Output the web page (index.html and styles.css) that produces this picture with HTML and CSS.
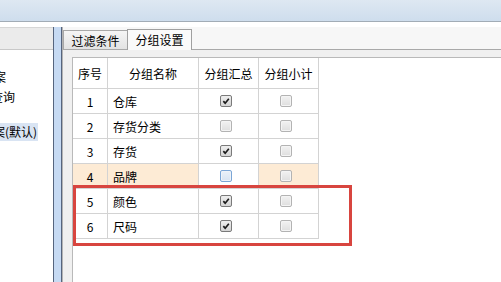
FILE: index.html
```html
<!DOCTYPE html>
<html lang="zh-CN">
<head>
<meta charset="utf-8">
<title>分组设置</title>
<link rel="stylesheet" href="styles.css">
</head>
<body>
<div class="topbar"></div>
<div class="main">
  <aside class="left">
    <div class="left-head"></div>
    <ul class="tree">
      <li class="item w1"><span>方案</span></li>
      <li class="item w2"><span>查询</span></li>
      <li class="item w3 selected"><span>方案(默认)</span></li>
    </ul>
  </aside>
  <div class="splitter"></div>
  <section class="content">
    <div class="tabs">
      <div class="tab">过滤条件</div>
      <div class="tab active">分组设置</div>
    </div>
    <div class="panel">
      <div class="grid-area">
        <div class="grid">
          <div class="cell head">序号</div>
          <div class="cell head">分组名称</div>
          <div class="cell head">分组汇总</div>
          <div class="cell head">分组小计</div>

          <div class="cell">1</div>
          <div class="cell name">仓库</div>
          <div class="cell chk"><span class="cb checked"><svg viewBox="0 0 12 12"><path d="M2.8 6.2 L5 8.6 L9.4 3.2"/></svg></span></div>
          <div class="cell chk"><span class="cb"></span></div>

          <div class="cell">2</div>
          <div class="cell name">存货分类</div>
          <div class="cell chk"><span class="cb"></span></div>
          <div class="cell chk"><span class="cb"></span></div>

          <div class="cell">3</div>
          <div class="cell name">存货</div>
          <div class="cell chk"><span class="cb checked"><svg viewBox="0 0 12 12"><path d="M2.8 6.2 L5 8.6 L9.4 3.2"/></svg></span></div>
          <div class="cell chk"><span class="cb"></span></div>

          <div class="cell hl">4</div>
          <div class="cell name hl">品牌</div>
          <div class="cell chk"><span class="cb focus"></span></div>
          <div class="cell chk hl"><span class="cb"></span></div>

          <div class="cell">5</div>
          <div class="cell name">颜色</div>
          <div class="cell chk"><span class="cb checked"><svg viewBox="0 0 12 12"><path d="M2.8 6.2 L5 8.6 L9.4 3.2"/></svg></span></div>
          <div class="cell chk"><span class="cb"></span></div>

          <div class="cell">6</div>
          <div class="cell name">尺码</div>
          <div class="cell chk"><span class="cb checked"><svg viewBox="0 0 12 12"><path d="M2.8 6.2 L5 8.6 L9.4 3.2"/></svg></span></div>
          <div class="cell chk"><span class="cb"></span></div>
        </div>
        <div class="redbox"></div>
      </div>
    </div>
  </section>
</div>
</body>
</html>
```
FILE: styles.css
```css
* { box-sizing: border-box; }

html, body {
  margin: 0;
  padding: 0;
}

body {
  width: 501px;
  height: 282px;
  overflow: hidden;
  background: #ffffff;
  color: #000000;
  font-family: "Noto Sans CJK SC", "Liberation Sans", sans-serif;
  font-size: 12px;
}

.topbar {
  height: 22px;
  background: linear-gradient(#dee8f2, #cedded);
  border-bottom: 1px solid #a2acb6;
}

.main {
  display: flex;
  height: 260px;
  padding-top: 5px;
  background: #ffffff;
}

/* left panel */
.left {
  width: 53px;
  display: flex;
  flex-direction: column;
  background: #ffffff;
}

.left-head {
  height: 23px;
  background: #ebebeb;
  border-top: 1px solid #d6d6d6;
  border-bottom: 1px solid #c8c8c8;
}

.tree {
  list-style: none;
  margin: 0;
  padding: 17px 0 0 0;
}

.item {
  display: flex;
  justify-content: flex-end;
  overflow: hidden;
  white-space: nowrap;
  height: 20px;
  line-height: 20px;
}

.item span { flex: none; }

.w1 { width: 6px; }
.w2 { width: 15px; }
.w3 {
  width: 38px;
  margin-top: 16px;
  height: 18px;
  line-height: 18px;
  padding-right: 1px;
}

.selected { background: #d9e4f3; }

/* splitter */
.splitter {
  width: 9px;
  background: #c6daf3;
  border-left: 1px solid #56657e;
  border-right: 1px solid #56657e;
}

/* content */
.content {
  flex: 1;
  display: flex;
  flex-direction: column;
  border-left: 1px solid #b4b4b4;
}

.tabs {
  height: 23px;
  display: flex;
  align-items: flex-end;
  background: #f7f7f7;
  border-bottom: 1px solid #a9a9a9;
}

.tab {
  width: 65px;
  height: 19px;
  display: flex;
  align-items: center;
  justify-content: center;
  background: linear-gradient(#f5f5f5, #e3e3e3);
  border: 1px solid #a8a8a8;
  border-bottom: none;
}

.tab.active {
  height: 21px;
  margin-bottom: -1px;
  margin-left: -1px;
  background: #fafafa;
  border-color: #a0a0a0;
  padding-bottom: 2px;
}

.panel {
  flex: 1;
  display: flex;
  flex-direction: column;
  background: #f0f0f0;
  padding: 7px 0 0 9px;
}

.grid-area {
  flex: 1;
  position: relative;
  background: #ffffff;
  border-top: 1px solid #b9b9b9;
  border-left: 1px solid #b9b9b9;
}

.grid {
  display: grid;
  grid-template-columns: 35px 91px 60px 60px;
  grid-template-rows: 31px;
  grid-auto-rows: 25px;
  width: 246px;
}

.cell {
  display: flex;
  align-items: center;
  justify-content: center;
  border-right: 1px solid #d3d3d3;
  border-bottom: 1px solid #d3d3d3;
  white-space: nowrap;
}

.cell.name {
  justify-content: flex-start;
  padding-left: 5px;
}

.cell.chk { padding-right: 5px; }

.cell.hl { background: #fdebd5; }

.cb {
  width: 12px;
  height: 12px;
  border: 1px solid #b3b3b3;
  border-radius: 2px;
  background: linear-gradient(#f2f2f2, #dedede);
  box-shadow: inset 0 0 0 1px #f4f4f4;
  display: block;
}

.cb.checked {
  border-color: #7a7a7a;
  background: linear-gradient(#eeeeee, #d4d4d4);
  box-shadow: none;
}

.cb svg {
  display: block;
  width: 10px;
  height: 10px;
  fill: none;
  stroke: #1b1b1b;
  stroke-width: 2;
}

.cb.focus {
  border-color: #7ba6d6;
  background: linear-gradient(#eaf1f9, #d7e3f1);
  box-shadow: inset 0 0 0 1px #eef3f9;
}

.redbox {
  position: absolute;
  left: 0;
  top: 127px;
  width: 279px;
  height: 61px;
  border: 3px solid #d8453f;
}
```
